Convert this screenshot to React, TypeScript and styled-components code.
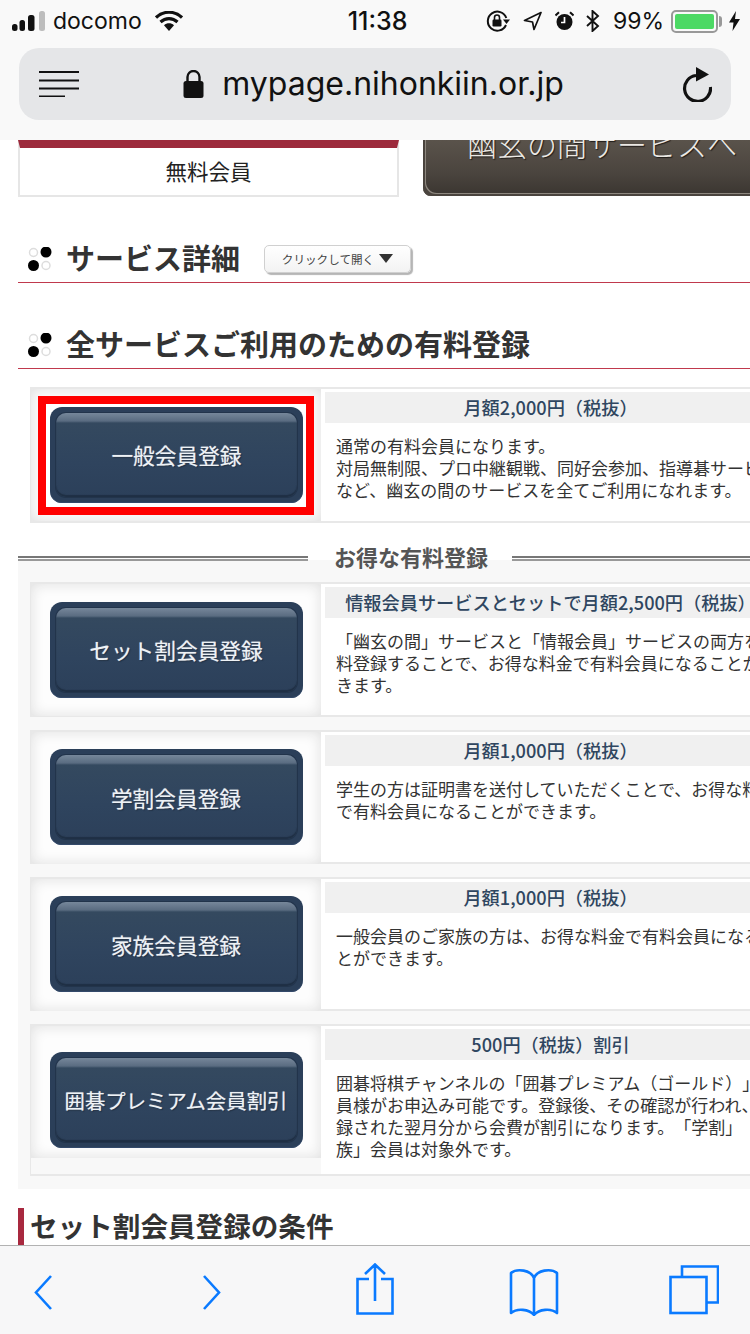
import React from 'react';
import styled, { createGlobalStyle } from 'styled-components';

const JP = `'Noto Sans CJK JP', 'Liberation Sans', sans-serif`;
const UI = `Inter, 'Liberation Sans', sans-serif`;
const BLUE = '#0a7aff';

const GlobalStyle = createGlobalStyle`
    html, body {
        margin: 0;
        padding: 0;
        background: #fff;
    }
    * {
        box-sizing: border-box;
        text-spacing-trim: space-all;
    }
`;

const Phone = styled.div`
    width: 750px;
    height: 1334px;
    display: flex;
    flex-direction: column;
    overflow: hidden;
    font-family: ${JP};
    color: #333;
    background: #fff;
`;

const Chrome = styled.header`
    flex: 0 0 140px;
    background: #f9f9f9;
`;

const StatusBar = styled.div`
    height: 48px;
    display: flex;
    align-items: center;
    padding: 0 10px 6px 12px;
    font-family: ${UI};
    color: #111;
`;

const StatusSide = styled.div<{ $end?: boolean }>`
    flex: 1 1 0;
    display: flex;
    align-items: center;
    justify-content: ${(p) => (p.$end ? 'flex-end' : 'flex-start')};
`;

const Carrier = styled.span`
    font-size: 23px;
    margin: 0 13px 0 8px;
`;

const Clock = styled.span`
    width: 62px;
    margin-left: 3px;
    text-align: center;
    font-size: 25px;
    font-weight: 500;
`;

const StatusIcon = styled.svg<{ $gap?: number }>`
    display: block;
    flex: none;
    margin-right: ${(p) => p.$gap ?? 0}px;
`;

const Percent = styled.span`
    font-size: 23px;
    margin-right: 7px;
`;

const Battery = styled.div`
    width: 47px;
    height: 23px;
    padding: 2px;
    border: 2px solid #999;
    border-radius: 5px;
    position: relative;
    margin-right: 11px;

    &::before {
        content: '';
        display: block;
        height: 100%;
        background: #4cd964;
        border-radius: 2px;
    }

    &::after {
        content: '';
        position: absolute;
        right: -6px;
        top: 4px;
        width: 3px;
        height: 11px;
        background: #999;
        border-radius: 0 3px 3px 0;
    }
`;

const UrlBar = styled.div`
    height: 72px;
    margin: 0 19px;
    padding: 0 19px 0 20px;
    display: flex;
    align-items: center;
    justify-content: space-between;
    background: #e5e6e8;
    border-radius: 20px;
`;

const UrlCenter = styled.div`
    display: flex;
    align-items: center;
    gap: 18px;
    margin-right: 14px;
`;

const UrlText = styled.span`
    font-family: ${UI};
    font-size: 32px;
    line-height: 40px;
    color: #111;
`;

const Scroller = styled.main`
    flex: 1 1 0;
    min-height: 0;
    overflow: hidden;
`;

const TopRow = styled.div`
    display: flex;
    gap: 24px;
    padding-left: 18px;
`;

const PlanBox = styled.div`
    flex: 0 0 381px;
    height: 57px;
    padding-bottom: 2px;
    display: flex;
    align-items: center;
    justify-content: center;
    border: 2px solid #e6e6e6;
    border-top: 8px solid #9c2a3c;
    font-size: 21.5px;
    color: #222;
`;

const DarkLink = styled.div`
    flex: 1;
    height: 56px;
    overflow: hidden;
    border-radius: 0 0 0 8px;
    background: linear-gradient(#5a534b, #4a443e 60%, #3a3530);
    box-shadow: inset 5px -5px 0 -3px #4a443e, inset 6px -6px 0 -3px #8d877f;
    font-size: 30px;
    line-height: 40px;
    white-space: nowrap;
    color: #ece9e4;
    text-shadow: 1px 1px 1px #1f1c19;
    padding-left: 44px;
`;

const DarkLinkLabel = styled.div`
    margin-top: -17px;
    font-weight: 300;
`;

const Heading = styled.div`
    height: 48px;
    margin: 38px 0 0 18px;
    padding: 0 0 0 10px;
    display: flex;
    align-items: center;
    border-bottom: 1px solid #c0394d;
`;

const HeadingText = styled.h2`
    margin: 0 0 3px 14px;
    font-size: 29px;
    line-height: 40px;
    font-weight: 700;
    color: #333;
`;

const ToggleButton = styled.div`
    width: 147px;
    height: 28px;
    margin-left: 24px;
    display: flex;
    align-items: center;
    justify-content: center;
    gap: 5px;
    font-size: 11.6px;
    color: #444;
    background: linear-gradient(#fff, #f3f3f3);
    border: 1px solid #d0d0d0;
    border-radius: 5px;
    box-shadow: 2px 2px 1px #b5b5b5;
`;

const ToggleArrow = styled.span`
    width: 0;
    height: 0;
    border-left: 7px solid transparent;
    border-right: 7px solid transparent;
    border-top: 9px solid #333;
`;

const Row = styled.section<{ $height: number; $top?: number }>`
    width: 750px;
    height: ${(p) => p.$height}px;
    margin-top: ${(p) => p.$top ?? 13}px;
    display: flex;
    background: #fff;
    border-top: 2px solid #e8e8e8;
    border-bottom: 2px solid #e8e8e8;
`;

const LeadRow = styled(Row)`
    margin-left: 30px;
`;

const ActionCell = styled.div`
    flex: 0 0 291px;
    position: relative;
    display: flex;
    align-items: center;
    justify-content: center;
    background: #f8f8f8;
    border-left: 1px solid #e8e8e8;

    &::before {
        content: '';
        position: absolute;
        left: 0;
        right: 0;
        top: 0;
        height: 132px;
        background: #fdfdfd;
        box-shadow: inset 0 0 14px #dedede;
    }
`;

const Highlight = styled.div`
    position: relative;
    padding: 3px 3px 4px 4px;
    background: #fff;
    border: 8px solid #f00;
`;

const RegisterButton = styled.div<{ $size?: number }>`
    position: relative;
    width: 253px;
    height: 96px;
    padding: 6px;
    background: #2b3f59;
    border-radius: 12px;
    box-shadow: inset 0 -1px 0 #33496a;
    font-size: ${(p) => p.$size ?? 21.7}px;
    color: #eef2f6;
`;

const ButtonFace = styled.div`
    height: 100%;
    display: flex;
    align-items: center;
    justify-content: center;
    white-space: nowrap;
    border-radius: 10px;
    background: linear-gradient(#76879a, #5a6c81 8px, #34495f 10px, #2f445e 60%, #2c405a);
    box-shadow: 0 0 0 1px #22344b, inset 0 -2px 1px #1f2f44;
    text-shadow: 0 0 1px rgba(255, 255, 255, 0.6), 1px 1px 1px #1b2a3d;
`;

const DetailCell = styled.div`
    flex: 1;
    min-width: 0;
    padding: 3px 0 0 4px;
`;

const PriceBand = styled.div`
    width: 451px;
    height: 31px;
    padding-bottom: 1px;
    display: flex;
    align-items: center;
    justify-content: center;
    white-space: nowrap;
    background: #f0f0f0;
    font-size: 18.2px;
    font-weight: 500;
    color: #2f4660;
`;

const Description = styled.p`
    margin: 12px 0 0 11px;
    font-size: 17px;
    line-height: 22px;
    white-space: nowrap;
    color: #333;
`;

const DescriptionLine = styled.span`
    display: block;
`;

const Panel = styled.div`
    margin: 17px 0 0 18px;
    padding: 0 0 13px 12px;
    background: linear-gradient(#fff 20px, #f8f8f8 20px);
`;

const Divider = styled.div`
    height: 42px;
    margin-left: -12px;
    display: flex;
    align-items: center;
    padding-bottom: 6px;
`;

const DividerLine = styled.span<{ $width: number }>`
    flex: 0 0 ${(p) => p.$width}px;
    height: 5px;
    border-top: 2px solid #777;
    border-bottom: 2px solid #999;
`;

const DividerText = styled.span`
    margin: 0 24px 4px 26px;
    font-size: 22px;
    font-weight: 700;
    line-height: 30px;
    white-space: nowrap;
    color: #555;
`;

const SubHeading = styled.h3`
    margin: 19px 0 0 18px;
    padding: 0 0 4px 6px;
    border-left: 6px solid #a8293f;
    font-size: 27.6px;
    line-height: 34px;
    font-weight: 700;
    white-space: nowrap;
    color: #333;
`;

const Toolbar = styled.footer`
    flex: 0 0 89px;
    display: flex;
    align-items: center;
    padding-left: 34px;
    background: #f7f7f8;
    border-top: 1px solid #b2b2b2;
`;

const ToolIcon = styled.svg<{ $left?: number; $lift?: number }>`
    flex: none;
    display: block;
    margin-left: ${(p) => p.$left ?? 0}px;
    transform: translateY(${(p) => p.$lift ?? 0}px);
    fill: none;
    stroke: ${BLUE};
    stroke-width: 2.6;
`;

const GoDots = () => (
    <StatusIcon width='24' height='24' viewBox='0 0 24 24'>
        <circle cx='5.5' cy='5.5' r='4' fill='#fff' stroke='#ddd' strokeWidth='1.5' />
        <circle cx='18' cy='5' r='5.5' fill='#000' />
        <circle cx='5.5' cy='18.5' r='5.5' fill='#000' />
        <circle cx='18' cy='18.5' r='4' fill='#fff' stroke='#ddd' strokeWidth='1.5' />
    </StatusIcon>
);

interface PlanRowProps {
    height: number;
    top?: number;
    label: string;
    labelSize?: number;
    price: string;
    lines: string[];
    highlight?: boolean;
}

const PlanRowBody = ({ label, labelSize, price, lines, highlight }: PlanRowProps) => {
    const button = (
        <RegisterButton $size={labelSize}>
            <ButtonFace>{label}</ButtonFace>
        </RegisterButton>
    );

    return (
        <>
            <ActionCell>{highlight ? <Highlight>{button}</Highlight> : button}</ActionCell>
            <DetailCell>
                <PriceBand>{price}</PriceBand>
                <Description>
                    {lines.map((line) => (
                        <DescriptionLine key={line}>{line}</DescriptionLine>
                    ))}
                </Description>
            </DetailCell>
        </>
    );
};

const discountPlans: PlanRowProps[] = [
    {
        height: 135,
        top: 0,
        label: 'セット割会員登録',
        price: '情報会員サービスとセットで月額2,500円（税抜）',
        lines: [
            '「幽玄の間」サービスと「情報会員」サービスの両方を有',
            '料登録することで、お得な料金で有料会員になることがで',
            'きます。',
        ],
    },
    {
        height: 134,
        label: '学割会員登録',
        price: '月額1,000円（税抜）',
        lines: [
            '学生の方は証明書を送付していただくことで、お得な料金',
            'で有料会員になることができます。',
        ],
    },
    {
        height: 134,
        label: '家族会員登録',
        price: '月額1,000円（税抜）',
        lines: [
            '一般会員のご家族の方は、お得な料金で有料会員になるこ',
            'とができます。',
        ],
    },
    {
        height: 152,
        label: '囲碁プレミアム会員割引',
        labelSize: 20.4,
        price: '500円（税抜）割引',
        lines: [
            '囲碁将棋チャンネルの「囲碁プレミアム（ゴールド）」会',
            '員様がお申込み可能です。登録後、その確認が行われ、登',
            '録された翌月分から会費が割引になります。「学割」「家',
            '族」会員は対象外です。',
        ],
    },
];

export default function App() {
    return (
        <Phone>
            <GlobalStyle />
            <Chrome>
                <StatusBar>
                    <StatusSide>
                        <StatusIcon width='33' height='20' viewBox='0 0 33 20'>
                            <rect x='0' y='13' width='5.5' height='7' rx='2.5' fill='#111' />
                            <rect x='7.5' y='9' width='5.5' height='11' rx='2.5' fill='#111' />
                            <rect x='16' y='4' width='6.5' height='16' rx='2.5' fill='#111' />
                            <rect x='27' y='0' width='6' height='20' rx='2.5' fill='#bdbdbd' />
                        </StatusIcon>
                        <Carrier>docomo</Carrier>
                        <StatusIcon width='28' height='20' viewBox='0 0 28 20'>
                            <path d='M1 6.5C8.5 -0.5 19.5 -0.5 27 6.5' fill='none' stroke='#111' strokeWidth='3.2' />
                            <path d='M5.5 11C10.5 6.5 17.5 6.5 22.5 11' fill='none' stroke='#111' strokeWidth='3.2' />
                            <path d='M9 14.2C12 11.6 16 11.6 19 14.2L14 20Z' fill='#111' />
                        </StatusIcon>
                    </StatusSide>
                    <Clock>11:38</Clock>
                    <StatusSide $end>
                        <StatusIcon $gap={13} width='24' height='22' viewBox='0 0 24 22'>
                            <path d='M20 15A9.5 9.5 0 1 1 20.3 8' fill='none' stroke='#111' strokeWidth='2' />
                            <path d='M17 9.5h7l-3.5 4.5z' fill='#111' />
                            <rect x='6.5' y='9.5' width='9' height='7' rx='1.2' fill='#111' />
                            <path d='M8.5 10V7.5a2.5 2.5 0 0 1 5 0V10' fill='none' stroke='#111' strokeWidth='1.6' />
                        </StatusIcon>
                        <StatusIcon $gap={13} width='19' height='20' viewBox='0 0 19 20'>
                            <path d='M18 1.5 1.5 9.5 9.5 11 11 18.5Z' fill='none' stroke='#111' strokeWidth='1.7' strokeLinejoin='round' />
                        </StatusIcon>
                        <StatusIcon $gap={12} width='19' height='20' viewBox='0 0 19 20'>
                            <circle cx='9.5' cy='11' r='8' fill='#111' />
                            <path d='M9.5 6v5.5H6' fill='none' stroke='#fff' strokeWidth='1.7' />
                            <path d='M0.5 4.5 4 1.2M18.5 4.5 15 1.2' fill='none' stroke='#111' strokeWidth='2' />
                        </StatusIcon>
                        <StatusIcon $gap={13} width='14' height='22' viewBox='0 0 14 22'>
                            <path d='M1 6 12 16 6.5 21V1L12 6 1 16' fill='none' stroke='#111' strokeWidth='1.9' />
                        </StatusIcon>
                        <Percent>99%</Percent>
                        <Battery />
                        <StatusIcon width='11' height='20' viewBox='0 0 11 20'>
                            <path d='M7 0 0 11.5H4.5L3.5 20 11 8H6Z' fill='#111' />
                        </StatusIcon>
                    </StatusSide>
                </StatusBar>
                <UrlBar>
                    <StatusIcon width='40' height='26' viewBox='0 0 40 26'>
                        <path d='M0 1h40M0 9.5h40M0 17.5h40M0 25.5h26' stroke='#111' strokeWidth='2' />
                    </StatusIcon>
                    <UrlCenter>
                        <StatusIcon width='21' height='28' viewBox='0 0 21 28'>
                            <rect x='0.5' y='11' width='20' height='17' rx='2.5' fill='#111' />
                            <path d='M4.5 12V7a6 6 0 0 1 12 0v5' fill='none' stroke='#111' strokeWidth='2.4' />
                        </StatusIcon>
                        <UrlText>mypage.nihonkiin.or.jp</UrlText>
                    </UrlCenter>
                    <StatusIcon width='30' height='35' viewBox='0 0 30 35'>
                        <path d='M14 8.5A13 13 0 1 0 28.5 20' fill='none' stroke='#111' strokeWidth='3.2' />
                        <path d='M14 0 27 7.5 14 14.5Z' fill='#111' />
                    </StatusIcon>
                </UrlBar>
            </Chrome>

            <Scroller>
                <TopRow>
                    <PlanBox>無料会員</PlanBox>
                    <DarkLink>
                        <DarkLinkLabel>幽玄の間サービスへ</DarkLinkLabel>
                    </DarkLink>
                </TopRow>

                <Heading>
                    <GoDots />
                    <HeadingText>サービス詳細</HeadingText>
                    <ToggleButton>
                        クリックして開く
                        <ToggleArrow />
                    </ToggleButton>
                </Heading>

                <Heading>
                    <GoDots />
                    <HeadingText>全サービスご利用のための有料登録</HeadingText>
                </Heading>

                <LeadRow $height={136} $top={18}>
                    <PlanRowBody
                        height={136}
                        highlight
                        label='一般会員登録'
                        price='月額2,000円（税抜）'
                        lines={[
                            '通常の有料会員になります。',
                            '対局無制限、プロ中継観戦、同好会参加、指導碁サービス',
                            'など、幽玄の間のサービスを全てご利用になれます。',
                        ]}
                    />
                </LeadRow>

                <Panel>
                    <Divider>
                        <DividerLine $width={290} />
                        <DividerText>お得な有料登録</DividerText>
                        <DividerLine $width={240} />
                    </Divider>
                    {discountPlans.map((plan) => (
                        <Row key={plan.label} $height={plan.height} $top={plan.top}>
                            <PlanRowBody {...plan} />
                        </Row>
                    ))}
                </Panel>

                <SubHeading>セット割会員登録の条件</SubHeading>
            </Scroller>

            <Toolbar>
                <ToolIcon $lift={2} width='18' height='35' viewBox='0 0 18 35'>
                    <path d='M17 1 2 17.5 17 34' />
                </ToolIcon>
                <ToolIcon $left={151} $lift={2} width='18' height='35' viewBox='0 0 18 35'>
                    <path d='M1 1 16 17.5 1 34' />
                </ToolIcon>
                <ToolIcon $left={135} $lift={-1} width='38' height='52' viewBox='0 0 38 52'>
                    <path d='M13 16H1.5V50.5H36.5V16H25M19 38V2M9 11 19 1.5 29 11' />
                </ToolIcon>
                <ToolIcon $left={115} $lift={2} width='50' height='48' viewBox='0 0 50 48'>
                    <path d='M25 10C22 2 8 0 2 5V45C8 40 20 41 25 47C30 41 42 40 48 45V5C42 0 28 2 25 10ZM25 10V47' strokeLinejoin='round' />
                </ToolIcon>
                <ToolIcon $left={110} $lift={0} width='50' height='50' viewBox='0 0 50 50'>
                    <path d='M13 11V1.5H49V37.5H38' />
                    <rect x='1.5' y='12' width='36' height='36' />
                </ToolIcon>
            </Toolbar>
        </Phone>
    );
}
